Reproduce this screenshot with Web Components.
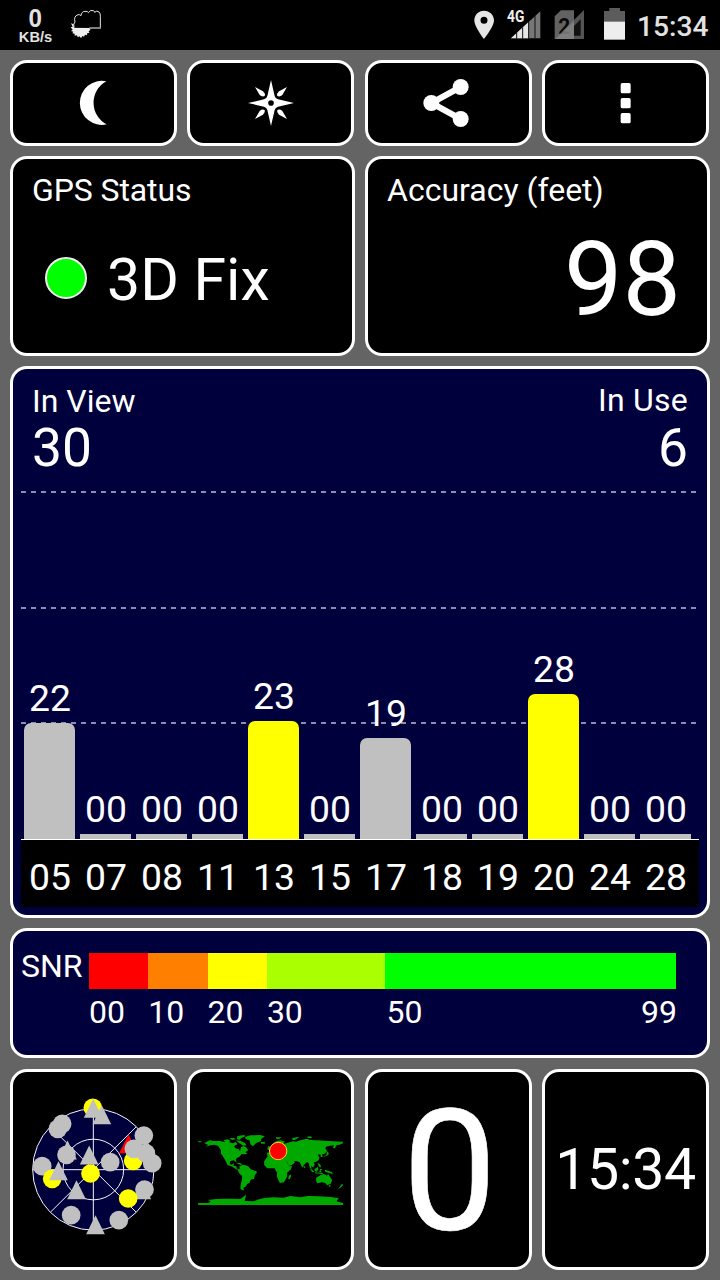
<!DOCTYPE html>
<html lang="en">
<head>
<meta charset="utf-8">
<title>GPS Test</title>
<style>
  body {
    margin: 0;
    background: #646464;
    color: #fff;
    font-family: Roboto, sans-serif;
  }
</style>
</head>
<body>
<gps-app></gps-app>

<script>
class StatusBar extends HTMLElement {
  constructor() {
    super();
    this.attachShadow({ mode: "open" });
  }

  connectedCallback() {
    const time = this.getAttribute("time");

    this.shadowRoot.innerHTML = `
      <div class="speed"><b>0</b><span>KB/s</span></div>
      <svg class="weather" width="32" height="32" viewBox="210 24 96 96">
        <path d="M212 82 L218 80 L213 70 L221 73 L222 82 L270 83 L271 91 L266 93 L268 99 L262 99 L261 106 L255 104 L252 110 L247 108 L243 115 L239 109 L233 112 L231 106 L224 107 L224 101 L217 100 L220 95 L213 93 L218 89Z" fill="#eee"/>
        <path d="M222 83 Q219 70 225 66 Q220 49 234 44 Q240 43 243 47 Q245 34 255 34 Q263 33 265 38 Q272 28 280 32 Q284 33 284 37 Q290 30 297 36 Q302 40 301 50 V84" fill="#000" stroke="#e8e8e8" stroke-width="3"/>
        <path d="M268 84 H303" stroke="#999" stroke-width="5"/>
      </svg>
      <span class="fill"></span>
      <svg class="pin" width="20" height="30" viewBox="342 31 60 90">
        <path fill-rule="evenodd" d="M372 33 C355 33 343 46 343 62 C343 82 372 118 372 118 C372 118 402 82 402 62 C402 46 389 33 372 33Z M372 51.500 a10.500 10.500 0 1 1 0 21 a10.500 10.500 0 1 1 0 -21Z" fill="#e6e6e6"/>
      </svg>
      <svg class="signal" width="34" height="32" viewBox="443 26 102 96">
        <path d="M543 36 V117 H455Z" fill="#777"/>
        <path d="M507 69 V117 H455Z" fill="#e6e6e6"/>
        <path d="M472 98 V118 M490 84 V118 M508 68 V118 M527 50 V118" stroke="#111" stroke-width="3"/>
        <text x="443" y="68" font-size="49" font-weight="700" textLength="52" lengthAdjust="spacingAndGlyphs" fill="#eee">4G</text>
      </svg>
      <svg class="sim" width="31" height="32" viewBox="582 26 93 96">
        <path d="M584 51 L603 33 H642 V119 H584Z" fill="#626262"/>
        <text x="595" y="105" font-size="68" font-weight="700" textLength="36" lengthAdjust="spacingAndGlyphs" fill="#0a0a0a">2</text>
        <path d="M672 32 V119 H584Z" fill="#777" fill-opacity=".7"/>
        <path d="M662 60 V109 H642 V80Z" fill="#111"/>
        <path d="M642 66 L588 119 H642Z" fill="#8a8a8a" fill-opacity=".55"/>
      </svg>
      <svg class="battery" width="21" height="32" viewBox="732 25 63 96">
        <path d="M748 25 H780 V34 H795 V67 H732 V34 H748Z" fill="#5c5c5c"/>
        <path d="M732 66 H795 V120 H732Z" fill="#eee"/>
      </svg>
      <time>${time}</time>
      <style>
        :host {
          display: flex;
          align-items: flex-start;
          box-sizing: border-box;
          height: 50px;
          padding: 0 11px 0 17px;
          background: #000;
          color: #e2e2e2;
        }

        .speed {
          display: flex;
          flex-direction: column;
          align-items: center;
          width: 37px;
          padding-top: 5px;
          font: bold 14.670px/16px "Liberation Sans", sans-serif;
        }

        .speed b {
          font-size: 26px;
          line-height: 27px;
          height: 24px;
          transform: scaleX(.93);
        }

        .fill { flex: 1; }
        svg { flex: none; margin-top: 8px; overflow: visible; }
        .weather { margin-left: 16px; }
        .pin { margin: 10px 13px 0 0; }
        .signal { margin-right: 13px; }
        .sim { margin-right: 19px; }
        .battery { margin-right: 12px; }

        time {
          width: 72px;
          padding: 9px 1px 0 0;
          box-sizing: border-box;
          text-align: right;
          font-size: 28.200px;
          font-weight: 500;
          line-height: 36px;
        }
      </style>
    `;
  }
}

class GpsTile extends HTMLElement {
  constructor() {
    super();
    this.attachShadow({ mode: "open" });
    this.shadowRoot.innerHTML = `
      <slot></slot>
      <style>
        :host {
          display: block;
          box-sizing: border-box;
          min-width: 0;
          border: 3px solid #fff;
          border-radius: 17px;
          background: #000;
          overflow: hidden;
        }

        :host([navy]) { background: #00003c; }

        :host([center]) {
          display: flex;
          align-items: center;
          justify-content: center;
        }
      </style>
    `;
  }
}

// All icons are drawn around 0,0 at three units per pixel
const ICONS = {
  moon: `<path d="M37 -65 A66 66 0 1 0 38 64 A73 73 0 0 1 37 -65Z"/>`,
  compass: `
    <path fill-rule="evenodd" d="M0 -69 L11 -21 Q13 -13 21 -11 L69 0 L21 11 Q13 13 11 21 L0 69 L-11 21 Q-13 13 -21 11 L-69 0 L-21 -11 Q-13 -13 -11 -21Z M0 -8.500 a8.500 8.500 0 1 0 0 17 a8.500 8.500 0 1 0 0 -17Z"/>
    <path d="M-48 -48 L-24 -35 Q-16 -28 -19 -21 Q-26 -17 -34 -24Z"/>
    <path d="M48 -48 L24 -35 Q16 -28 19 -21 Q26 -17 34 -24Z"/>
    <path d="M-48 48 L-24 35 Q-16 28 -19 21 Q-26 17 -34 24Z"/>
    <path d="M48 48 L24 35 Q16 28 19 21 Q26 17 34 24Z"/>`,
  share: `
    <path d="M38 -48 L-50 0 L38 48" fill="none" stroke="#fff" stroke-width="18"/>
    <circle cx="38" cy="-48" r="24"/><circle cx="-50" cy="0" r="24"/><circle cx="38" cy="48" r="24"/>`,
  more: `
    <rect x="-13" y="-60" width="30" height="31" rx="5"/>
    <rect x="-13" y="-15" width="30" height="31" rx="5"/>
    <rect x="-13" y="30" width="30" height="31" rx="5"/>`,
};

class TileIcon extends HTMLElement {
  constructor() {
    super();
    this.attachShadow({ mode: "open" });
  }

  connectedCallback() {
    this.shadowRoot.innerHTML = `
      <svg width="60" height="60" viewBox="-90 -90 180 180" fill="#fff">${ICONS[this.getAttribute("name")]}</svg>
      <style>
        :host { display: block; }
        svg { display: block; }
      </style>
    `;
  }
}

class FixStatus extends HTMLElement {
  constructor() {
    super();
    this.attachShadow({ mode: "open" });
    this.shadowRoot.innerHTML = `
      <div class="title">GPS Status</div>
      <div class="fix"><i></i><slot></slot></div>
      <style>
        :host { display: block; padding: 11px 18px 0 19px; }
        .title { font-size: 32px; line-height: 40px; letter-spacing: -.1px; }

        .fix {
          display: flex;
          align-items: flex-start;
          gap: 20px;
          padding: 40px 0 0 13px;
          font-size: 59px;
          line-height: 60px;
        }

        i {
          box-sizing: border-box;
          width: 42px;
          height: 42px;
          margin-top: 7px;
          border: 2px solid #f4f4f4;
          border-radius: 50%;
          background: #0f0;
        }
      </style>
    `;
  }
}

class AccuracyReadout extends HTMLElement {
  constructor() {
    super();
    this.attachShadow({ mode: "open" });
    this.shadowRoot.innerHTML = `
      <div class="title">Accuracy (feet)</div>
      <div class="value"><slot></slot></div>
      <style>
        :host { display: block; padding: 11px 26px 0 19px; }
        .title { font-size: 32px; line-height: 40px; }

        .value {
          padding-top: 16px;
          text-align: right;
          font-size: 104px;
          line-height: 108px;
        }
      </style>
    `;
  }
}

class SignalChart extends HTMLElement {
  constructor() {
    super();
    this.attachShadow({ mode: "open" });
  }

  connectedCallback() {
    // id, snr, bar height, used in fix
    const sats = [
      ["05", "22", 116], ["07", "00", 5], ["08", "00", 5], ["11", "00", 5],
      ["13", "23", 118, true], ["15", "00", 5], ["17", "19", 101], ["18", "00", 5],
      ["19", "00", 5], ["20", "28", 145, true], ["24", "00", 5], ["28", "00", 5],
    ];

    const bars = sats.map(([, snr, height, used]) => `
      <div class="sat">
        <span>${snr}</span>
        <i class="${used ? "used" : ""} ${height > 5 ? "round" : ""}" style="height: ${height}px"></i>
      </div>`).join("");
    const ids = sats.map(([id]) => `<span>${id}</span>`).join("");

    this.shadowRoot.innerHTML = `
      <header>
        <div><p>In View</p><b>30</b></div>
        <div class="right"><p>In Use</p><b>6</b></div>
      </header>
      <div class="plot">
        <svg width="678" height="357" viewBox="0 0 678 357">
          <path d="M0 10 H676 M0 126 H676 M0 241 H676" stroke="#8c8cb4" stroke-width="2" stroke-dasharray="5 5"/>
        </svg>
        <div class="bars">${bars}</div>
      </div>
      <div class="axis">${ids}</div>
      <style>
        :host { display: block; padding: 0 8px; }

        header {
          display: flex;
          justify-content: space-between;
          height: 100px;
          padding: 13px 11px 0;
        }

        p { margin: 0; font-size: 32px; line-height: 38px; }
        b { display: block; font-weight: 400; font-size: 53.330px; line-height: 56px; }
        .right { text-align: right; }
        .right p { line-height: 36px; padding-bottom: 2px; letter-spacing: .25px; }

        .plot { display: grid; height: 357px; }
        .plot > * { grid-area: 1 / 1; }

        .bars, .axis {
          display: grid;
          grid-template-columns: repeat(12, 51px);
          column-gap: 5px;
          padding-left: 3px;
          font-size: 37.330px;
          text-align: center;
        }

        .sat {
          display: flex;
          flex-direction: column;
          justify-content: flex-end;
        }

        .sat span { line-height: 40px; margin: 0 0 5px 1px; }
        .sat i { background: #c0c0c0; }
        .sat .round { border-radius: 7px 7px 0 0; }
        .sat .used { background: #ff0; }

        .axis {
          box-sizing: border-box;
          height: 68px;
          padding-top: 8px;
          border-top: 1px solid #fff;
          background: #000;
          line-height: 58px;
        }

        .axis span { margin-left: 1px; }
      </style>
    `;
  }
}

class SnrScale extends HTMLElement {
  constructor() {
    super();
    this.attachShadow({ mode: "open" });
    this.shadowRoot.innerHTML = `
      <div class="name">SNR</div>
      <div class="scale">
        <i style="background: #f00"></i>
        <i style="background: #ff8000"></i>
        <i style="background: #ff0"></i>
        <i style="background: #af0"></i>
        <i style="background: #0f0"></i>
        <span>00</span><span>10</span><span>20</span><span>30</span>
        <span class="last"><em>50</em><em>99</em></span>
      </div>
      <style>
        :host { display: flex; padding: 22px 31px 0 8px; font-size: 32px; }
        .name { width: 68px; line-height: 26px; }

        .scale {
          flex: 1;
          display: grid;
          grid-template-columns: 10fr 10fr 10fr 20fr 49fr;
          grid-template-rows: 36px 46px;
        }

        span { line-height: 46px; }
        .last { display: flex; justify-content: space-between; padding-left: 1px; margin-right: -1px; }
        em { font-style: normal; }
      </style>
    `;
  }
}

class SkyPlot extends HTMLElement {
  constructor() {
    super();
    this.attachShadow({ mode: "open" });
  }

  connectedCallback() {
    const dot = (x, y, color = "#c0c0c0") => `<circle cx="${x}" cy="${y}" r="28" fill="${color}"/>`;
    // x and y are the tip of the triangle
    const tri = (x, y, color = "#c0c0c0") => `<path d="M${x} ${y} l28 57 h-56Z" fill="${color}"/>`;

    this.shadowRoot.innerHTML = `
      <svg width="150" height="150" viewBox="-2.500 14.500 450 450">
        <g fill="none" stroke="#f2f2ff" stroke-width="3">
          <circle cx="220.500" cy="238" r="182" fill="#00003c"/>
          <circle cx="220.500" cy="238" r="91"/>
          <path d="M220.500 56 V420 M38 238.500 H403"/>
          <path d="M92 366 L349 110 M92 110 L349 366"/>
        </g>
        ${dot(219, 53, "#ff0")}
        ${tri(220, 26)}${tri(246, 45)}
        ${dot(127, 101)}${dot(114, 116)}
        ${tri(143, 151)}${dot(140, 194)}
        ${tri(208, 166)}${dot(271, 216)}
        ${dot(67, 228)}${dot(97, 266, "#ff0")}${tri(116, 213)}
        ${dot(212, 250, "#ff0")}
        ${tri(170, 270)}${dot(154, 375)}
        ${tri(227, 375)}${dot(297, 390)}
        ${tri(366, 270)}${dot(374, 298)}
        ${dot(325, 325, "#ff0")}
        ${tri(326, 132, "#f00")}
        ${dot(340, 212, "#ff0")}
        ${dot(372, 136)}${dot(342, 176)}${dot(378, 189)}${dot(397, 219)}
      </svg>
      <style>
        :host { display: block; }
        svg { display: block; }
      </style>
    `;
  }
}

class WorldMap extends HTMLElement {
  constructor() {
    super();
    this.attachShadow({ mode: "open" });
    this.shadowRoot.innerHTML = `
      <svg width="160" height="95" viewBox="2.500 6 480 285">
        <g fill="#00a800">
          <!-- North and Central America -->
          <path d="M24 64 H34 V67 H24Z M42 69 L50 65 L58 61 L72 63 L90 63 L102 66 L116 66 L128 70 L136 66 L142 72 L132 79 L136 85 L146 88 L150 94 L152 82 L160 78 L168 82 L174 91 L166 97 L172 101 L164 103 L154 102 L148 110 L140 114 L137 119 L140 128 L135 124 L130 121 L120 124 L119 132 L124 134 L131 130 L130 137 L139 139 L140 146 L150 148 L145 150 L136 147 L127 140 L112 135 L106 122 L98 109 L92 100 L92 90 L84 78 L72 74 L60 76 L46 81 L54 75Z"/>
          <!-- Arctic islands and Greenland -->
          <path d="M100 61 L112 58 L122 63 L114 67 L104 65Z M117 55 L132 54 L136 58 L126 60Z M142 48 L162 45 L166 49 L154 54 L148 60 L140 57Z M137 61 L150 62 L164 69 L169 76 L160 77 L148 70Z M165 51 L180 46 L210 45 L224 49 L214 56 L212 64 L198 69 L188 79 L181 73 L178 61 L166 57Z M212 66 H224 V71 H213Z"/>
          <path d="M138 129 L150 129 L158 134 L150 134Z M157 135 H166 V138 H157Z"/>
          <!-- South America -->
          <path d="M148 138 L160 134 L174 139 L182 148 L199 154 L200 159 L194 165 L192 176 L182 179 L178 188 L170 193 L168 199 L160 203 L161 212 L151 207 L151 196 L155 181 L156 168 L149 162 L143 152 L149 146Z"/>
          <!-- Europe and Asia -->
          <path d="M232 108 L230 98 L239 97 L237 91 L246 86 L248 78 L246 73 L258 64 L271 61 L284 65 L280 72 L294 68 L308 64 L318 65 L330 61 L350 56 L360 60 L382 61 L402 62 L428 64 L459 65 L458 70 L448 74 L440 75 L434 85 L428 84 L432 75 L420 77 L407 80 L406 86 L411 93 L404 101 L396 103 L397 111 L392 111 L390 103 L383 104 L388 113 L385 121 L376 126 L370 127 L374 135 L369 142 L362 137 L365 148 L359 143 L355 129 L351 126 L341 134 L339 143 L334 139 L329 127 L321 124 L312 123 L314 128 L306 134 L297 138 L290 127 L283 114 L277 110 L268 110 L260 104 L252 102 L243 108Z"/>
          <path d="M235 77 L240 80 L244 88 L235 90 L231 88Z M257 52 L274 52 L267 57 L258 56Z M307 54 L327 50 L324 54 L314 60 L306 59Z M350 50 L362 49 L366 54 L354 54Z"/>
          <!-- Africa and Madagascar -->
          <path d="M233 108 L254 105 L258 110 L268 112 L283 113 L291 128 L297 139 L306 138 L301 149 L291 158 L291 168 L288 176 L281 187 L269 189 L265 181 L260 169 L261 158 L256 151 L254 145 L242 145 L231 145 L222 135 L222 124 L226 118Z M301 163 L303 168 L299 178 L294 176 L296 168Z"/>
          <!-- Japan, Indonesia, Australia, New Zealand -->
          <path d="M410 94 L416 99 L414 105 L403 110 L397 113 L409 104Z M382 128 L390 133 L393 142 L387 141Z M342 139 H345 V144 H342Z M358 145 L367 150 L373 156 L366 156Z M373 147 L383 141 L385 147 L380 155 L374 153Z M389 147 L397 147 L391 152 L395 157 L388 156Z M374 157 L400 159 L398 162 L375 160Z M404 149 L413 152 L425 156 L429 163 L420 160 L414 158 L405 155Z"/>
          <path d="M378 173 L388 167 L396 163 L404 163 L410 167 L414 162 L420 171 L426 181 L421 192 L411 196 L405 189 L395 187 L382 190 L378 184Z M416 196 H421 V200 H416Z M455 191 L459 195 L451 203 L443 206 L451 198Z"/>
          <!-- Antarctica -->
          <path d="M24 249 L54 249 L62 244 L53 240 L78 237 L104 236 L128 236 L150 237 L160 230 L168 223 L166 232 L164 243 L190 244 L202 239 L222 234 L250 232 L280 233 L300 228 L330 232 L354 228 L386 229 L422 231 L446 235 L439 244 L459 249 V255 H24Z"/>
        </g>
        <circle cx="264" cy="93" r="26" fill="#f00" stroke="#ffd21a" stroke-width="3"/>
      </svg>
      <style>
        :host { display: block; }
        svg { display: block; }
      </style>
    `;
  }
}

class GpsApp extends HTMLElement {
  constructor() {
    super();
    this.attachShadow({ mode: "open" });
    this.shadowRoot.innerHTML = `
      <status-bar time="15:34"></status-bar>
      <main>
        <div class="row four">
          <gps-tile center><tile-icon name="moon"></tile-icon></gps-tile>
          <gps-tile center><tile-icon name="compass"></tile-icon></gps-tile>
          <gps-tile center><tile-icon name="share"></tile-icon></gps-tile>
          <gps-tile center><tile-icon name="more"></tile-icon></gps-tile>
        </div>
        <div class="row two">
          <gps-tile><fix-status>3D Fix</fix-status></gps-tile>
          <gps-tile><accuracy-readout>98</accuracy-readout></gps-tile>
        </div>
        <gps-tile navy><signal-chart></signal-chart></gps-tile>
        <gps-tile navy><snr-scale></snr-scale></gps-tile>
        <div class="row four last">
          <gps-tile center><sky-plot></sky-plot></gps-tile>
          <gps-tile center><world-map></world-map></gps-tile>
          <gps-tile center><span class="speed">0</span></gps-tile>
          <gps-tile center><span class="clock">15:34</span></gps-tile>
        </div>
      </main>
      <style>
        :host { display: block; width: 720px; height: 1280px; overflow: hidden; }

        main {
          display: grid;
          grid-template-rows: 86px 200px 552px 130px 202px;
          gap: 10px;
          padding: 10px;
        }

        .row { display: grid; }
        .two { grid-template-columns: 1fr 1fr; column-gap: 10px; }
        .four { grid-template-columns: repeat(4, 167px); column-gap: 10.330px; }
        .last { padding-top: 1px; }

        .speed { font-size: 168px; line-height: 180px; padding: 4px 0 0 3px; -webkit-text-stroke: .6px #fff; }
        .clock { font-size: 57.300px; line-height: 60px; letter-spacing: -.4px; padding-top: 1px; }
      </style>
    `;
  }
}

customElements.define("status-bar", StatusBar);
customElements.define("gps-tile", GpsTile);
customElements.define("tile-icon", TileIcon);
customElements.define("fix-status", FixStatus);
customElements.define("accuracy-readout", AccuracyReadout);
customElements.define("signal-chart", SignalChart);
customElements.define("snr-scale", SnrScale);
customElements.define("sky-plot", SkyPlot);
customElements.define("world-map", WorldMap);
customElements.define("gps-app", GpsApp);
</script>
</body>
</html>
